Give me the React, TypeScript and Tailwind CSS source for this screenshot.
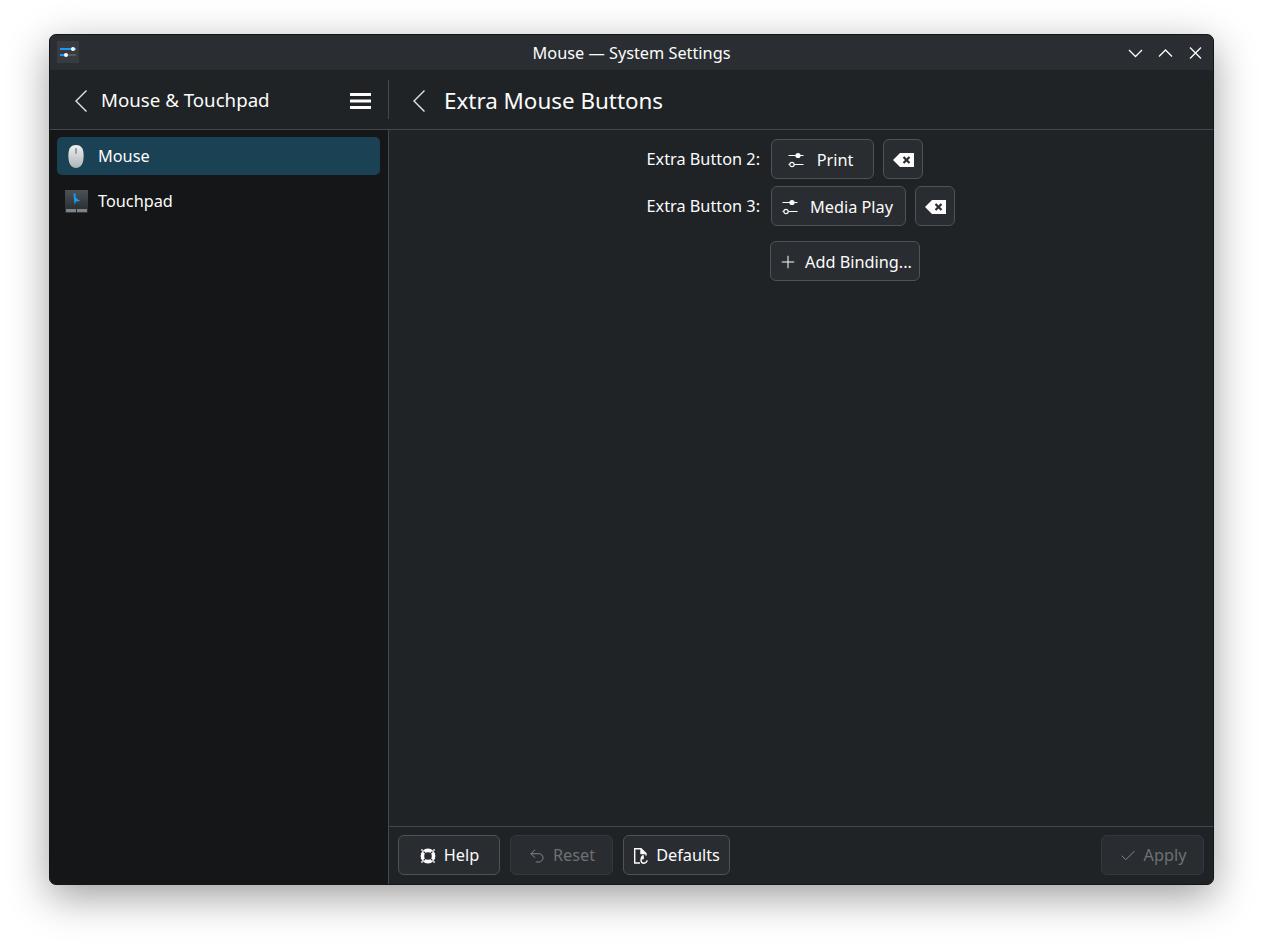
import { Check, Plus, Undo2 } from "lucide-react";
import type { ReactNode } from "react";

function Btn({ children, className = "", disabled = false }: { children: ReactNode; className?: string; disabled?: boolean }) {
  return (
    <div
      className={`flex h-10 items-center justify-center rounded-[6px] border bg-[#292c30] pt-[2px] ${
        disabled ? "border-[#34373b] text-[#6e7174]" : "border-[#4f5256] text-[#fcfcfc]"
      } ${className}`}
    >
      {children}
    </div>
  );
}

function Back() {
  return (
    <svg width="14" height="24" viewBox="0 0 14 24" fill="none" stroke="#e4e5e6" strokeWidth="1.4">
      <path d="M12.5 1.5L2 12l10.5 10.5" />
    </svg>
  );
}

function Sliders() {
  return (
    <svg width="16" height="16" viewBox="0 0 16 16" fill="none" stroke="#fcfcfc" strokeWidth="1.2">
      <path d="M0.5 3.5h15M6 12.5h9.5M0.5 12.5h1" />
      <circle cx="10" cy="3.5" r="2.6" fill="#fcfcfc" stroke="none" />
      <circle cx="4" cy="12.5" r="2.2" fill="#292c30" />
    </svg>
  );
}

function Backspace() {
  return (
    <svg width="21" height="14" viewBox="0 0 21 14">
      <path d="M7 0h14v14H7L0 7z" fill="#fcfcfc" />
      <path d="M10.5 4l6 6M16.5 4l-6 6" stroke="#292c30" strokeWidth="2.2" fill="none" />
    </svg>
  );
}

function Lifebuoy() {
  return (
    <svg width="16" height="16" viewBox="0 0 16 16" fill="none">
      <circle cx="8" cy="8" r="5.6" stroke="#fcfcfc" strokeWidth="3.6" />
      <path d="M3.6 3.6l2.6 2.6M12.4 3.6l-2.6 2.6M3.6 12.4l2.6-2.6M12.4 12.4l-2.6-2.6" stroke="#292c30" strokeWidth="1.2" />
      <path d="M1 1h2v2H1zM13 1h2v2h-2zM1 13h2v2H1zM13 13h2v2h-2z" fill="#fcfcfc" opacity="0.6" />
    </svg>
  );
}

function DocRevert() {
  return (
    <svg width="15" height="16" viewBox="0 0 15 16" fill="none" stroke="#fcfcfc" strokeWidth="1.4">
      <path d="M7 15H1.7V0.7H8L13 5.5V7.5" />
      <path d="M8 1v4.5h5" fill="#fcfcfc" />
      <path d="M14 12.2a3 3 0 1 1-3-3H8.5M10.5 7.3L8.5 9.2l2 2" />
    </svg>
  );
}

function MouseIcon() {
  return (
    <svg width="16" height="23" viewBox="0 0 16 23">
      <defs>
        <linearGradient id="mouseBody" x1="0" y1="0" x2="0" y2="1">
          <stop offset="0" stopColor="#eef0f1" />
          <stop offset="1" stopColor="#aeb4b8" />
        </linearGradient>
      </defs>
      <path d="M8 0c5 0 7 3 7.5 8 .4 5 .2 15-7.5 15S.1 13 .5 8C1 3 3 0 8 0z" fill="url(#mouseBody)" />
      <rect x="7.2" y="3" width="1.6" height="6" rx="0.8" fill="#878e92" />
    </svg>
  );
}

function TouchpadIcon() {
  return (
    <svg width="23" height="23" viewBox="0 0 23 23">
      <defs>
        <linearGradient id="padBody" x1="0" y1="0" x2="0" y2="1">
          <stop offset="0" stopColor="#4c5256" />
          <stop offset="1" stopColor="#25292c" />
        </linearGradient>
      </defs>
      <rect width="23" height="23" fill="url(#padBody)" />
      <path d="M8.5 3.5h2l.3 4.3 4.5 3.2-4.2.6-1.6 3z" fill="#1d99f3" />
      <rect x="1" y="19" width="10" height="3.2" fill="#7d8286" />
      <rect x="12" y="19" width="10" height="3.2" fill="#7d8286" />
    </svg>
  );
}

function AppIcon() {
  return (
    <div className="flex h-[22px] w-[22px] flex-col justify-center gap-[4px] bg-[#383c41] px-[3px]">
      <div className="relative h-[2px] bg-[#1d99f3]">
        <span className="absolute right-[1px] top-[-1px] h-1 w-1 rounded-full bg-white" />
      </div>
      <div className="relative h-[2px] bg-[#565b5f]">
        <span className="absolute left-0 top-0 h-[2px] w-[6px] bg-[#1d99f3]" />
        <span className="absolute left-[4px] top-[-1px] h-1 w-1 rounded-full bg-white" />
      </div>
    </div>
  );
}

export default function App() {
  return (
    <div className="h-[947px] w-[1261px] overflow-hidden bg-white pl-[49px] pt-[34px] font-['Noto_Sans',sans-serif] text-[16.3px] text-[#fcfcfc]">
      <div className="flex h-[851px] w-[1165px] flex-col overflow-hidden rounded-[7px] border border-[#141618] bg-[#202326] shadow-[0_12px_40px_rgba(0,0,0,0.38)]">
        {/* title bar */}
        <div className="relative flex h-[35px] shrink-0 items-center justify-center bg-[#2a2e32]">
          <div className="absolute left-[7px] top-[6px]">
            <AppIcon />
          </div>
          <span className="pt-[2px]">Mouse — System Settings</span>
          <div className="absolute right-[11px] top-[11px] flex items-center gap-[15px]">
            <svg width="15" height="15" viewBox="0 0 15 15" fill="none" stroke="#fcfcfc" strokeWidth="1.3">
              <path d="M1 4l6.5 6.5L14 4" />
            </svg>
            <svg width="15" height="15" viewBox="0 0 15 15" fill="none" stroke="#fcfcfc" strokeWidth="1.3">
              <path d="M1 10.5L7.5 4 14 10.5" />
            </svg>
            <svg className="ml-px" width="13" height="15" viewBox="0 0 13 15" fill="none" stroke="#fcfcfc" strokeWidth="1.3">
              <path d="M1 1.5l11 11M12 1.5l-11 11" />
            </svg>
          </div>
        </div>

        {/* header */}
        <div className="flex h-[60px] shrink-0 border-b border-[#44474b]">
          <div className="flex w-[338px] shrink-0 items-center pl-[24px] pr-[16px] pt-[2px]">
            <Back />
            <span className="ml-[13px] flex-1 text-[18.7px]">Mouse &amp; Touchpad</span>
            <svg width="22" height="16" viewBox="0 0 22 16" fill="#fcfcfc">
              <rect width="21" height="3" y="0" />
              <rect width="21" height="3" y="6.5" />
              <rect width="21" height="3" y="13" />
            </svg>
          </div>
          <div className="my-[10px] w-px bg-[#44474b]" />
          <div className="flex flex-1 items-center pl-[23px] pt-[2px]">
            <Back />
            <span className="ml-[18px] text-[22.4px]">Extra Mouse Buttons</span>
          </div>
        </div>

        <div className="flex min-h-0 flex-1">
          {/* sidebar */}
          <div className="flex w-[338px] shrink-0 flex-col bg-[#141618] pl-[7px] pr-[8px] pt-[7px]">
            <div className="flex h-[38px] items-center rounded-[5px] bg-[#1a4254] pl-[11px]">
              <MouseIcon />
              <span className="ml-[14px]">Mouse</span>
            </div>
            <div className="mt-[7px] flex h-[38px] items-center pl-[8px]">
              <TouchpadIcon />
              <span className="ml-[10px]">Touchpad</span>
            </div>
          </div>
          <div className="w-px bg-[#44474b]" />

          {/* content */}
          <div className="flex min-w-0 flex-1 flex-col">
            <div className="flex flex-1 flex-col pt-[8px]">
              <div className="flex h-[41px] items-center">
                <span className="w-[371px] pt-[2px] text-right">Extra Button 2:</span>
                <Btn className="ml-[11px] w-[103px] gap-[13px] pr-[4px]">
                  <Sliders />
                  <span className="pt-[2px]">Print</span>
                </Btn>
                <Btn className="ml-[9px] w-10">
                  <Backspace />
                </Btn>
              </div>
              <div className="mt-[6px] flex h-[41px] items-center">
                <span className="w-[371px] pt-[2px] text-right">Extra Button 3:</span>
                <Btn className="ml-[11px] w-[135px] gap-[12px] pr-[2px]">
                  <Sliders />
                  <span className="pt-[2px]">Media Play</span>
                </Btn>
                <Btn className="ml-[9px] w-10">
                  <Backspace />
                </Btn>
              </div>
              <Btn className="ml-[381px] mt-[15px] w-[150px] gap-[7px]">
                <Plus size={20} strokeWidth={1.2} />
                Add Binding...
              </Btn>
            </div>

            {/* footer */}
            <div className="flex h-[58px] shrink-0 items-center border-t border-[#44474b] pb-[2px] pl-[9px] pr-[9px]">
              <Btn className="w-[102px] gap-[8px] pl-[1px]">
                <Lifebuoy />
                Help
              </Btn>
              <Btn disabled className="ml-[10px] w-[103px] gap-[7px]">
                <Undo2 className="text-[#85888b]" size={18} strokeWidth={1.3} />
                Reset
              </Btn>
              <Btn className="ml-[10px] w-[107px] gap-[8px]">
                <DocRevert />
                Defaults
              </Btn>
              <Btn disabled className="ml-auto w-[103px] gap-[7px]">
                <Check className="text-[#85888b]" size={18} strokeWidth={1.3} />
                Apply
              </Btn>
            </div>
          </div>
        </div>
      </div>
    </div>
  );
}
